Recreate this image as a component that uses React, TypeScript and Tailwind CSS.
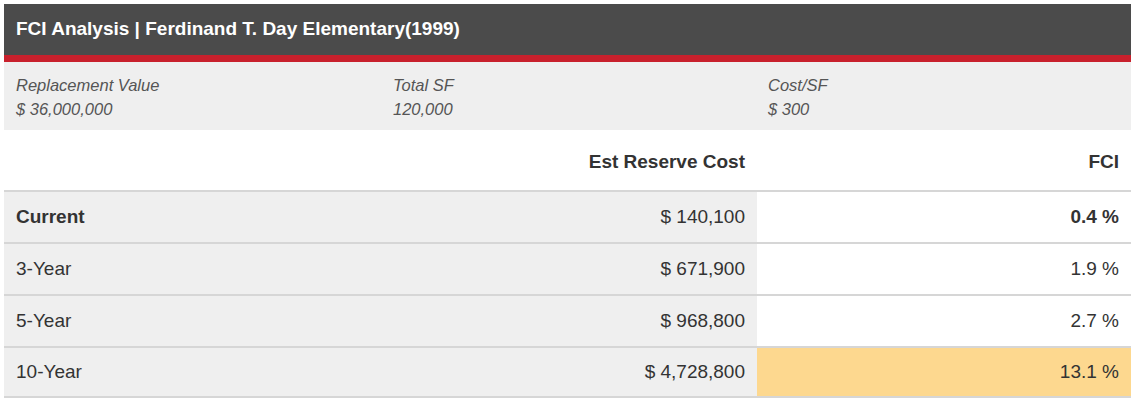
const rows = [
  { label: "Current", cost: "$ 140,100", fci: "0.4 %", bold: true },
  { label: "3-Year", cost: "$ 671,900", fci: "1.9 %" },
  { label: "5-Year", cost: "$ 968,800", fci: "2.7 %" },
  { label: "10-Year", cost: "$ 4,728,800", fci: "13.1 %", hot: true },
];

export default function App() {
  return (
    <div className="w-[1134px] h-[403px] bg-white pt-[4px] pl-[4px] font-['Liberation_Sans',Arial,sans-serif] text-[#333]">
      <div className="w-[1127px]">
        <div className="h-[51px] bg-[#4b4b4b] flex items-center px-3">
          <h1 className="text-white font-bold text-[19px]">FCI Analysis | Ferdinand T. Day Elementary(1999)</h1>
        </div>
        <div className="h-[7px] bg-[#c8202c]" />
        <div className="h-[68px] bg-[#efefef] grid grid-cols-[377px_375px_1fr] px-3 pt-[11px] italic text-[16.5px] text-[#555] leading-[24px]">
          <div>
            <div>Replacement Value</div>
            <div>$ 36,000,000</div>
          </div>
          <div>
            <div>Total SF</div>
            <div>120,000</div>
          </div>
          <div>
            <div>Cost/SF</div>
            <div>$ 300</div>
          </div>
        </div>
        <div className="grid grid-cols-[753px_374px] h-[60px] items-center font-bold text-[19px]">
          <div className="text-right pr-3 pt-[4px]">Est Reserve Cost</div>
          <div className="text-right pr-3 pt-[4px]">FCI</div>
        </div>
        {rows.map((r) => (
          <div key={r.label} className="grid grid-cols-[753px_374px] h-[52px] border-t-2 border-[#d6d6d6] text-[19px] last:border-b-2">
            <div className="bg-[#efefef] flex items-center justify-between px-3">
              <span className={r.bold ? "font-bold" : ""}>{r.label}</span>
              <span>{r.cost}</span>
            </div>
            <div className={`${r.hot ? "bg-[#fdd88f]" : "bg-white"} flex items-center justify-end px-3 ${r.bold ? "font-bold" : ""}`}>
              {r.fci}
            </div>
          </div>
        ))}
      </div>
    </div>
  );
}
